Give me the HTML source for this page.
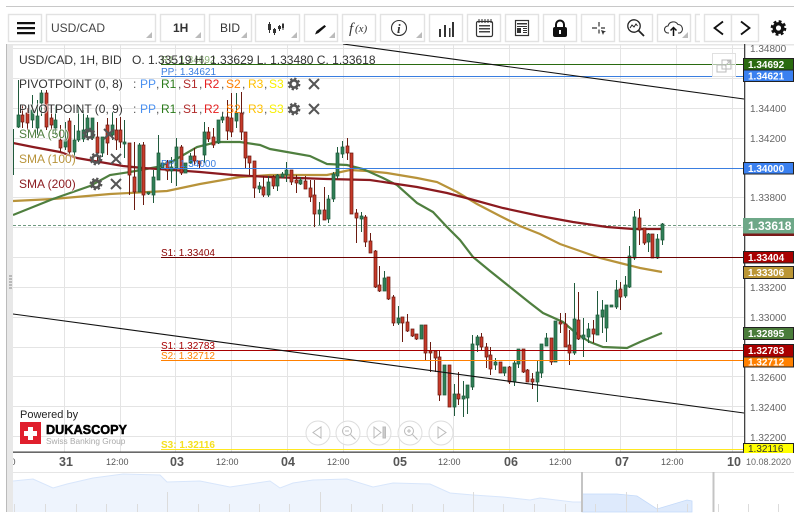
<!DOCTYPE html>
<html><head><meta charset="utf-8"><style>
html,body{margin:0;padding:0;background:#fff;width:807px;height:522px;overflow:hidden}
svg{display:block;font-family:"Liberation Sans",sans-serif}
.b{fill:#fff;stroke:#e2e2e2;stroke-width:1.4}
.t{font-size:12px;fill:#333}
.ax{font-size:10px;fill:#666}
.m{font-size:10px;font-weight:bold;fill:#fff}
.x{font-size:9px;fill:#555}
.d{font-size:12.5px;font-weight:bold;fill:#555}
.l{font-size:10px}
.tri{fill:#bbb}
.h{paint-order:stroke;stroke:rgba(255,255,255,.55);stroke-width:2px}
</style></head><body>
<svg width="807" height="522" viewBox="0 0 807 522" xmlns="http://www.w3.org/2000/svg">
<defs>
<clipPath id="c"><rect x="13" y="44" width="731" height="408"/></clipPath>
<clipPath id="a"><rect x="13" y="452" width="731" height="20"/></clipPath>
<g id="gear"><circle r="3.6" fill="none" stroke="#555" stroke-width="2.6"/><circle r="5.4" fill="none" stroke="#555" stroke-width="2" stroke-dasharray="2.3 1.94"/></g>
<path id="xx" d="M-5-5L5 5M5-5L-5 5" stroke="#555" stroke-width="2" fill="none"/>
</defs>
<rect x="6" y="6" width="788" height="1" fill="#c8c8c8"/>
<!-- toolbar -->
<rect class="b" x="8.5" y="14.5" width="33" height="27"/>
<rect class="b" x="46.5" y="14.5" width="109" height="27"/>
<rect class="b" x="160.5" y="14.5" width="44" height="27"/>
<rect class="b" x="209.5" y="14.5" width="42" height="27"/>
<rect class="b" x="255.5" y="14.5" width="44" height="27"/>
<rect class="b" x="304.5" y="14.5" width="33" height="27"/>
<rect class="b" x="342.5" y="14.5" width="33" height="27"/>
<rect class="b" x="380.5" y="14.5" width="44" height="27"/>
<rect class="b" x="429.5" y="14.5" width="33" height="27"/>
<rect class="b" x="467.5" y="14.5" width="33" height="27"/>
<rect class="b" x="505.5" y="14.5" width="33" height="27"/>
<rect class="b" x="543.5" y="14.5" width="33" height="27"/>
<rect class="b" x="581.5" y="14.5" width="33" height="27"/>
<rect class="b" x="619.5" y="14.5" width="33" height="27"/>
<rect class="b" x="657.5" y="14.5" width="33" height="27"/>
<path d="M700 14.5h-4.500v27h4.500" fill="none" stroke="#e2e2e2" stroke-width="1.400"/>
<rect class="b" x="704.500" y="14.500" width="27" height="27"/>
<rect class="b" x="731.500" y="14.500" width="27" height="27"/>
<path d="M17 22h18v2.200H17zM17 27h18v2.200H17zM17 32h18v2.200H17z" fill="#111"/>
<text class="t" x="51" y="32" style="fill:#444">USD/CAD</text>
<text x="173" y="32" style="font-size:12px;font-weight:bold;fill:#333">1H</text>
<text class="t" x="220" y="32" style="fill:#333">BID</text>
<path class="tri" d="M152 32v6h-6zM201 32v6h-6zM247 32v6h-6zM297 32v6h-6zM335 32v6h-6zM422 32v6h-6zM688 32v6h-6z"/>
<path d="M269.500 22v11M274.500 28v7M279.500 25v6M283 23v7" stroke="#333" stroke-width="1" fill="none"/>
<path d="M268 24h3v6h-3zM273 29h3v4h-3zM278 26h3v3h-3zM282 24h2v4h-2z" fill="#333"/>
<path d="M324.500 25l1.500 1.500-7.500 6.500-3.500 1.500 1.500-3.500z" fill="#111"/>
<text x="349" y="33" style="font-family:'Liberation Serif',serif;font-style:italic;font-size:15px;fill:#333">f</text>
<text x="355" y="32" style="font-family:'Liberation Serif',serif;font-style:italic;font-size:11px;fill:#333">(x)</text>
<circle cx="399" cy="28" r="7.500" fill="none" stroke="#333" stroke-width="1.100"/>
<text x="397" y="33" style="font-family:'Liberation Serif',serif;font-style:italic;font-weight:bold;font-size:13px;fill:#333">i</text>
<path d="M439 29h2v8h-2zM444 25h2v12h-2zM449 28h1.500v9H449zM452 22h2v15h-2z" fill="#333"/>
<rect x="476.500" y="21.500" width="16" height="15" rx="1.500" fill="none" stroke="#333" stroke-width="1.200"/>
<path d="M479 19v4M482 19v4M485 19v4M488 19v4M491 19v4" stroke="#333"/>
<path d="M479 25h11v1.500H479zM479 28h11v1.500H479zM479 31h11v1.500H479z" fill="#444"/>
<rect x="515.500" y="20.500" width="13" height="15" fill="none" stroke="#333" stroke-width="1.200"/>
<path d="M517 23h10v1.500h-10zM517 26h10v1h-10zM517 28h4v5h-4zM523 28h4v1h-4zM523 30h4v1h-4zM523 32h4v1h-4z" fill="#333"/>
<path d="M556 28v-3.500a4 4 0 0 1 8 0V28" fill="none" stroke="#111" stroke-width="2"/>
<rect x="553" y="27" width="14" height="10" rx="2" fill="#111"/>
<rect x="559" y="30" width="2" height="4" fill="#fff"/>
<path d="M599 22v4.500M599 29.500v4M592 28h5M601 28h4" stroke="#333" stroke-width="1.200" fill="none"/>
<path d="M601 30l5 1.500-2 1-1 2.500z" fill="#333"/>
<circle cx="634" cy="26" r="6.200" fill="none" stroke="#222" stroke-width="1.300"/>
<path d="M638.500 30.500l5.500 5.500" stroke="#222" stroke-width="1.800"/>
<path d="M630 28l2-3 2 2 2-3 1.500 2" fill="none" stroke="#222" stroke-width="1"/>
<path d="M669 33h-1a3.500 3.500 0 0 1 0-7 5.500 5.500 0 0 1 10-1.500 4.500 4.500 0 0 1 2 8.500h-2" fill="none" stroke="#333" stroke-width="1.100"/>
<path d="M673.500 36v-8M670.500 30.500l3-3 3 3" fill="none" stroke="#111" stroke-width="1.500"/>
<path d="M723 21.500l-8.500 6.500 8.500 6.500" fill="none" stroke="#111" stroke-width="1.800"/>
<path d="M741 21.500l8.500 6.500-8.500 6.500" fill="none" stroke="#111" stroke-width="1.800"/>
<g transform="translate(778.500 28) scale(1.120)"><circle r="3.800" fill="none" stroke="#111" stroke-width="3"/><circle r="5.900" fill="none" stroke="#111" stroke-width="2.200" stroke-dasharray="2.500 2.130"/></g>

<!-- frame -->
<rect x="6" y="44" width="1" height="468" fill="#bbb"/>
<rect x="7" y="44" width="6" height="468" fill="#e8e8e8"/>
<rect x="7" y="44" width="787" height="1.500" fill="#e6e6e6"/>
<path d="M9 276h3M9 279h3M9 282h3M9 285h3M9 288h3" stroke="#888"/>

<!-- chart -->
<g clip-path="url(#c)">
<path d="M13 48.500H744M13 78.500H744M13 108.500H744M13 138.500H744M13 168.500H744M13 197.500H744M13 227.500H744M13 257.500H744M13 287.500H744M13 317.500H744M13 347.500H744M13 376.500H744M13 406.500H744M13 436.500H744M8.500 44V452M64.500 44V452M120.500 44V452M175.500 44V452M231.500 44V452M287.500 44V452M343.500 44V452M399.500 44V452M453.500 44V452M509.500 44V452M564.500 44V452M620.500 44V452M676.500 44V452M732.500 44V452" stroke="#e4e4e4" stroke-width="1" fill="none"/>
<path d="M13 225.500H744" stroke="#6f9a80" stroke-width="1" stroke-dasharray="3 2" fill="none"/>
<!-- SMA -->
<path d="M13 201L53 199 110 194 167 191 200 184 240 177 270 175 327 175 350 170 367 171 387 173 417 178 437 182 457 192 477 204 500 216 520 226 540 234 560 244 580 251 600 258 620 263 640 268 662 272" fill="none" stroke="#b8933a" stroke-width="2.200"/>
<path d="M13 215L33 207 53 199 70 193 90 186 110 175 130 172 157 167 173 161 197 147 217 142 240 142 260 145 270 149 287 152 310 156 327 164 347 165 363 169 383 178 397 185 417 203 433 212 447 227 460 240 473 257 490 271 510 287 530 303 543 313 563 322 577 334 590 342 603 347 627 348 640 342 662 333" fill="none" stroke="#4f7f3f" stroke-width="2.200"/>
<path d="M13 143L33 147 60 152 77 158 100 162 123 166 143 168 173 170 200 172 233 175 270 177 327 179 370 180 390 183 417 187 447 193 470 199 503 208 540 216 573 222 607 227 633 229 662 229" fill="none" stroke="#8b1a1f" stroke-width="2.200"/>
<!-- wicks green -->
<path transform="translate(.5 0)" stroke="#205a3c" fill="none" stroke-width="1" d="M13 129V175M18 80V128M32 95V128M37 100V135M41 90V116M55 105V135M65 122V150M74 125V157M78 105V142M83 110V142M87 115V140M92 118V140M102 137V157M112 112V140M124 120V158M139 143V192M148 192V195M153 170V203M158 135V180M162 163V168M171 157V183M176 138V186M185 163V173M190 153V164M204 122V163M218 120V144M222 112V123M236 93V128M259 182V193M268 176V197M277 174V191M282 172V178M286 162V182M300 177V185M319 202V225M328 195V223M333 172V202M337 147V179M342 141V158M361 212V232M384 271V291M398 306V325M421 325V339M444 365V395M454 384V416M463 381V417M467 385V414M472 335V390M477 335V352M495 358V370M504 367V376M514 361V386M518 349V368M537 361V402M541 344V378M546 333V346M555 321V362M574 283V355M583 318V357M588 323V343M597 291V335M602 300V333M606 305V342M611 305V307M616 280V309M625 276V298M629 246V288M634 211V260M648 233V252M657 234V259M662 223V245"/>
<!-- wicks red -->
<path transform="translate(.5 0)" stroke="#6a1a10" fill="none" stroke-width="1" d="M22 105V128M27 108V130M46 90V130M51 105V130M60 125V152M69 118V155M97 122V162M107 118V155M116 118V150M120 117V148M129 143V195M134 142V210M143 142V205M167 160V180M181 145V175M194 148V165M199 161V168M208 127V142M213 128V148M227 100V140M231 93V137M241 92V140M245 132V168M249 156V175M254 161V198M263 176V197M273 175V189M291 170V185M296 175V193M305 176V189M310 180V202M314 180V227M324 187V220M347 138V160M351 153V214M356 209V243M365 215V247M370 233V253M375 250V288M379 266V292M388 277V300M393 295V326M402 317V342M407 314V332M412 329V337M416 334V340M425 325V361M430 342V372M435 351V372M439 351V401M449 365V407M458 372V405M481 333V351M486 343V368M490 347V375M500 362V373M509 366V384M523 349V373M527 369V382M532 373V389M551 338V365M560 313V333M565 313V347M569 330V365M578 292V340M593 320V343M620 282V310M639 209V245M644 228V245M652 234V258"/>
<!-- bodies green -->
<path fill="#2f7f56" stroke="#1f5a3a" stroke-width=".7" d="M17 115h3V127h-3zM31 110h3V120h-3zM36 116h3V128h-3zM40 93h3V103h-3zM54 120h3V128h-3zM64 140h3V147h-3zM73 140h3V152h-3zM77 131h3V140h-3zM82 130h3V139h-3zM86 118h3V132h-3zM91 118h3V138h-3zM101 137h3V153h-3zM111 125h3V135h-3zM123 142h3V144h-3zM138 145h3V192h-3zM147 192h3V194h-3zM152 177h3V195h-3zM157 153h3V180h-3zM161 163h3V168h-3zM170 167h3V171h-3zM175 147h3V168h-3zM184 163h3V173h-3zM189 156h3V163h-3zM203 132h3V155h-3zM217 120h3V143h-3zM221 117h3V120h-3zM235 113h3V121h-3zM258 186h3V189h-3zM267 182h3V195h-3zM276 175h3V186h-3zM281 174h3V177h-3zM285 170h3V175h-3zM299 180h3V184h-3zM318 210h3V214h-3zM327 199h3V219h-3zM332 174h3V199h-3zM336 153h3V176h-3zM341 147h3V154h-3zM360 216h3V219h-3zM383 278h3V291h-3zM397 318h3V323h-3zM420 325h3V339h-3zM443 365h3V395h-3zM453 394h3V407h-3zM462 396h3V399h-3zM466 385h3V398h-3zM471 344h3V387h-3zM476 337h3V345h-3zM494 362h3V365h-3zM503 367h3V373h-3zM513 363h3V382h-3zM517 349h3V364h-3zM536 372h3V382h-3zM540 344h3V373h-3zM545 338h3V346h-3zM554 321h3V362h-3zM573 319h3V353h-3zM582 335h3V339h-3zM587 329h3V337h-3zM596 315h3V335h-3zM601 310h3V317h-3zM605 305h3V328h-3zM610 305h3V307h-3zM615 290h3V307h-3zM624 285h3V296h-3zM628 256h3V287h-3zM633 217h3V258h-3zM647 234h3V242h-3zM656 239h3V258h-3zM661 224h3V240h-3z"/>
<!-- bodies red -->
<path fill="#c63a2a" stroke="#6a1a10" stroke-width=".7" d="M21 115h3V122h-3zM26 113h3V123h-3zM45 93h3V127h-3zM50 118h3V125h-3zM59 140h3V148h-3zM68 121h3V152h-3zM96 137h3V153h-3zM106 125h3V143h-3zM115 130h3V140h-3zM119 130h3V142h-3zM128 143h3V175h-3zM133 177h3V192h-3zM142 145h3V195h-3zM166 162h3V171h-3zM180 147h3V173h-3zM193 156h3V161h-3zM198 161h3V164h-3zM207 132h3V139h-3zM212 137h3V145h-3zM226 117h3V131h-3zM230 118h3V132h-3zM240 113h3V132h-3zM244 132h3V158h-3zM248 156h3V163h-3zM253 161h3V188h-3zM262 187h3V195h-3zM272 177h3V186h-3zM290 170h3V182h-3zM295 180h3V183h-3zM304 181h3V189h-3zM309 188h3V197h-3zM313 195h3V214h-3zM323 210h3V220h-3zM346 146h3V153h-3zM350 153h3V214h-3zM355 213h3V218h-3zM364 217h3V242h-3zM369 241h3V253h-3zM374 251h3V287h-3zM378 285h3V291h-3zM387 277h3V299h-3zM392 297h3V323h-3zM401 317h3V323h-3zM406 322h3V331h-3zM411 329h3V336h-3zM415 334h3V339h-3zM424 325h3V353h-3zM429 351h3V353h-3zM434 351h3V358h-3zM438 357h3V395h-3zM448 365h3V407h-3zM457 394h3V399h-3zM480 337h3V347h-3zM485 347h3V357h-3zM489 355h3V369h-3zM499 362h3V373h-3zM508 367h3V382h-3zM522 349h3V372h-3zM526 370h3V382h-3zM531 379h3V382h-3zM550 338h3V362h-3zM559 322h3V324h-3zM564 324h3V347h-3zM568 345h3V353h-3zM577 320h3V339h-3zM592 329h3V334h-3zM619 289h3V297h-3zM638 218h3V230h-3zM643 228h3V243h-3zM651 234h3V258h-3z"/>
<!-- levels -->
<path d="M161 64.500H744" stroke="#2a6a10" stroke-width="1" fill="none"/>
<path d="M161 76.500H744" stroke="#3a7ee0" stroke-width="1" fill="none"/>
<path d="M161 168.500H744" stroke="#3a7ee0" stroke-width="1" fill="none"/>
<path d="M161 257.500H744" stroke="#6a0000" stroke-width="1" fill="none"/>
<path d="M161 350.500H744" stroke="#a80000" stroke-width="1" fill="none"/>
<path d="M161 360.500H744" stroke="#ff8000" stroke-width="1" fill="none"/>
<path d="M161 449.500H744" stroke="#ffe820" stroke-width="1" fill="none"/>
<path d="M343 44L744 99" stroke="#111" stroke-width="1.100" fill="none"/>
<path d="M13 314L744 413" stroke="#111" stroke-width="1.100" fill="none"/>
<text class="l" x="161" y="63" fill="#6a9a50" opacity=".8">R1: 1.34692</text>
<text class="l" x="161" y="75" fill="#3a7ee0">PP: 1.34621</text>
<text class="l" x="161" y="167" fill="#3a7ee0">PP: 1.34000</text>
<text class="l" x="161" y="256" fill="#8b0000">S1: 1.33404</text>
<text class="l" x="161" y="349" fill="#a80000">S1: 1.32783</text>
<text class="l" x="161" y="359" fill="#ff8000">S2: 1.32712</text>
<text class="l" x="161" y="448" fill="#f5e020" style="font-weight:bold">S3: 1.32116</text>
</g>
<!-- overlay text -->
<text class="t" x="19" y="64">USD/CAD, 1H, BID</text>
<text class="t" x="132" y="64">O. 1.33519 H. 1.33629 L. 1.33480 C. 1.33618</text>
<g style="font-size:12px" fill="#555">
<text class="h" x="19" y="88" fill="#333">PIVOTPOINT (0, 8)</text><text x="133" y="88">:</text>
<text x="140" y="88" fill="#4a90f0">PP</text><text x="156" y="88">,</text>
<text x="161" y="88" fill="#2a7a1a">R1</text><text x="178" y="88">,</text>
<text x="183" y="88" fill="#b02a2a">S1</text><text x="199" y="88">,</text>
<text x="204" y="88" fill="#e52020">R2</text><text x="221" y="88">,</text>
<text x="226" y="88" fill="#ff7f00">S2</text><text x="242" y="88">,</text>
<text x="248" y="88" fill="#ffc000">R3</text><text x="264" y="88">,</text>
<text x="269" y="88" fill="#f8f000">S3</text>
<text class="h" x="19" y="113" fill="#333">PIVOTPOINT (0, 9)</text><text x="133" y="113">:</text>
<text x="140" y="113" fill="#4a90f0">PP</text><text x="156" y="113">,</text>
<text x="161" y="113" fill="#2a7a1a">R1</text><text x="178" y="113">,</text>
<text x="183" y="113" fill="#b02a2a">S1</text><text x="199" y="113">,</text>
<text x="204" y="113" fill="#e52020">R2</text><text x="221" y="113">,</text>
<text x="226" y="113" fill="#ff7f00">S2</text><text x="242" y="113">,</text>
<text x="248" y="113" fill="#ffc000">R3</text><text x="264" y="113">,</text>
<text x="269" y="113" fill="#f8f000">S3</text>
<text class="h" x="19" y="138" fill="#4f7f3f">SMA (50)</text>
<text class="h" x="19" y="163" fill="#b8933a">SMA (100)</text>
<text class="h" x="19" y="188" fill="#8b1a1f">SMA (200)</text>
</g>
<use href="#gear" x="294" y="84"/><use href="#xx" x="314" y="84"/>
<use href="#gear" x="294" y="109"/><use href="#xx" x="314" y="109"/>
<use href="#gear" x="89" y="134"/><use href="#xx" x="109" y="134"/>
<use href="#gear" x="96" y="159"/><use href="#xx" x="116" y="159"/>
<use href="#gear" x="96" y="184"/><use href="#xx" x="116" y="184"/>
<!-- popout -->
<rect x="712.500" y="53.500" width="23" height="23" fill="#fff" fill-opacity=".6" stroke="#e0e0e0"/>
<path d="M722 60h9v9h-9zM717 65h9v7h-9z" fill="none" stroke="#bbb"/>
<path d="M725 66l5-5M727 61h3v3" fill="none" stroke="#bbb"/>
<!-- nav buttons -->
<g fill="#fff" fill-opacity=".6" stroke="#ddd" stroke-width="1">
<circle cx="318" cy="433" r="12"/><circle cx="348" cy="433" r="12"/><circle cx="379" cy="433" r="12"/><circle cx="410" cy="433" r="12"/><circle cx="441" cy="433" r="12"/>
</g>
<g fill="none" stroke="#bbb" stroke-width="1">
<path d="M321 427v11l-8-5.500z"/>
<circle cx="347" cy="431" r="4.500"/><path d="M350.500 434.500l5 5M345 431h4"/>
<path d="M374 427v11l7-5.500z"/><path d="M383 427h2.500v11H383z" fill="#ccc"/>
<circle cx="409" cy="431" r="4.500"/><path d="M412.500 434.500l5 5M407 431h4M409 429v4"/>
<path d="M438 427v11l8-5.500z"/>
</g>
<!-- logo -->
<text x="20" y="418" style="font-size:11px;fill:#222">Powered by</text>
<rect x="20" y="422" width="21" height="22" fill="#e01f2d"/>
<path d="M28 427h5v4h4v5h-4v4h-5v-4h-4v-5h4z" fill="#fff"/>
<text x="46" y="434" textLength="81" lengthAdjust="spacingAndGlyphs" style="font-size:13px;font-weight:bold;fill:#000;stroke:#000;stroke-width:.5">DUKASCOPY</text>
<text x="46" y="444" style="font-size:8.300px;fill:#aaa">Swiss Banking Group</text>
<!-- right axis -->
<rect x="744" y="44" width="1.300" height="408" fill="#444"/>
<g class="ax">
<text class="ax" x="750" y="52">1.34800</text>
<text class="ax" x="750" y="112">1.34400</text>
<text class="ax" x="750" y="142">1.34200</text>
<text class="ax" x="750" y="201">1.33800</text>
<text class="ax" x="750" y="291">1.33200</text>
<text class="ax" x="750" y="321">1.33000</text>
<text class="ax" x="750" y="381">1.32600</text>
<text class="ax" x="750" y="411">1.32400</text>
<text class="ax" x="750" y="441">1.32200</text>
</g>
<g stroke="#222" stroke-width="1">
<rect x="743.500" y="58.500" width="50" height="11.500" fill="#2a6a10"/>
<rect x="743.500" y="70" width="50" height="11.500" fill="#3a80f0"/>
<rect x="743.500" y="162.500" width="50" height="11.500" fill="#3a80f0"/>
<rect x="743.500" y="251.500" width="50" height="11.500" fill="#a80000"/>
<rect x="743.500" y="266.500" width="50" height="12" fill="#bb9635"/>
<rect x="743.500" y="327.500" width="50" height="12" fill="#4a7c3a"/>
<rect x="743.500" y="344.500" width="50" height="12.500" fill="#a80000"/>
<rect x="743.500" y="357" width="50" height="10" fill="#ff8000"/>
<rect x="743.500" y="443.500" width="50" height="10" fill="#ffff00"/>
</g>
<rect x="743" y="218" width="51" height="18" fill="#6ea888"/>
<rect x="743" y="233.500" width="51" height="2.500" fill="#7a1a1a"/>
<text x="748" y="230" style="font-size:12px;font-weight:bold;fill:#fff">1.33618</text>
<text class="m" x="748" y="68">1.34692</text>
<text class="m" x="748" y="79.500">1.34621</text>
<text class="m" x="748" y="172">1.34000</text>
<text class="m" x="748" y="261">1.33404</text>
<text class="m" x="748" y="276">1.33306</text>
<text class="m" x="748" y="337">1.32895</text>
<text class="m" x="748" y="354">1.32783</text>
<text class="m" x="748" y="365.500">1.32712</text>
<text class="m" x="748" y="452" style="fill:#333;font-weight:normal">1.32116</text>
<rect x="743" y="453" width="52" height="19" fill="#fff"/>
<!-- x axis -->
<rect x="13" y="451.500" width="731" height="1.300" fill="#444"/>
<g clip-path="url(#a)"><text class="x" x="-7" y="465">12:00</text></g>
<text class="d" x="59" y="466">31</text><text class="x" x="106" y="465">12:00</text>
<text class="d" x="170" y="466">03</text><text class="x" x="216" y="465">12:00</text>
<text class="d" x="281" y="466">04</text><text class="x" x="327" y="465">12:00</text>
<text class="d" x="393" y="466">05</text><text class="x" x="438" y="465">12:00</text>
<text class="d" x="504" y="466">06</text><text class="x" x="549" y="465">12:00</text>
<text class="d" x="615" y="466">07</text><text class="x" x="661" y="465">12:00</text>
<text class="d" x="727" y="466">10</text>
<text x="746" y="465" style="font-size:9px;fill:#666">10.08.2020</text>
<!-- navigator -->
<rect x="13" y="472" width="781" height="1" fill="#e6e6e6"/>
<path d="M13 512V481L33 479 53 488 67 484 93 478 123 474 160 475 167 482 200 481 230 487 270 481 280 488 293 483 313 480 347 479 373 487 393 483 430 484 450 493 473 495 503 497 530 500 540 498 573 502 582 502V512z" fill="#eef4fd"/>
<path d="M13 481L33 479 53 488 67 484 93 478 123 474 160 475 167 482 200 481 230 487 270 481 280 488 293 483 313 480 347 479 373 487 393 483 430 484 450 493 473 495 503 497 530 500 540 498 573 502 582 502" fill="none" stroke="#d8e6fb" stroke-width="1"/>
<path d="M582 512V494L617 494 637 496 657 509 687 500 692 501V512z" fill="#deeafc" stroke="#c4dafa" stroke-width=".8"/>
<path d="M14.500 504V512M45.500 504V512M76.500 504V512M106.500 504V512M137.500 504V512M167.500 492V512M198.500 504V512M229.500 504V512M259.500 504V512M289.500 504V512M320.500 492V512M351.500 504V512M382.500 504V512M412.500 504V512M443.500 504V512M473.500 492V512M503.500 504V512M534.500 504V512M565.500 504V512M595.500 504V512M626.500 492V512M657.500 504V512M687.500 504V512M718.500 504V512M748.500 504V512M778.500 504V512" stroke="#dcdcdc" stroke-width="1" fill="none"/>
<rect x="581" y="472" width="2" height="40" fill="#c4c4c4"/>
<rect x="712.500" y="472" width="2" height="40" fill="#c4c4c4"/>
</svg>
</body></html>
